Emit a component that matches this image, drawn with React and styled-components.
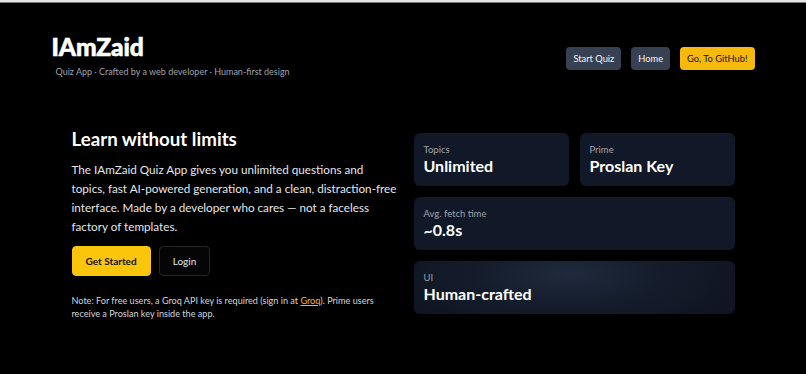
import React from 'react';
import styled, { createGlobalStyle } from 'styled-components';

const GlobalStyle = createGlobalStyle`
  html, body {
    margin: 0;
    padding: 0;
    background: #000;
  }
  body {
    font-family: Lato, "Noto Sans", Arial, sans-serif;
    color: #f3f4f6;
  }
  * { box-sizing: border-box; }
`;

const S = {
  Page: styled.div`
    width: 806px;
    height: 374px;
    background: #000;
    border-top: 2px solid #e6e6e6;
    box-shadow: inset 0 1px 0 #7a7a7a;
    overflow: hidden;
  `,

  Header: styled.header`
    width: 703px;
    margin: 0 auto;
    padding-top: 31px;
    display: flex;
    justify-content: space-between;
    align-items: flex-start;
  `,

  Brand: styled.div`
    display: flex;
    flex-direction: column;
  `,

  Logo: styled.h1`
    margin: 0;
    font-size: 24.5px;
    line-height: 28px;
    font-weight: 900;
    letter-spacing: -0.1px;
    color: #fff;
    -webkit-text-stroke: 0.6px #fff;
  `,

  Tagline: styled.p`
    margin: 5px 0 0 4px;
    font-size: 9px;
    color: #9ca3af;
  `,

  Nav: styled.nav`
    display: flex;
    gap: 10px;
    margin-top: 14px;
  `,

  NavButton: styled.button`
    font-family: inherit;
    font-size: 9.3px;
    height: 23px;
    padding: 0 7px;
    border: none;
    border-radius: 4px;
    background: ${(p) => (p.$accent ? '#f6b90c' : '#384152')};
    color: ${(p) => (p.$accent ? '#111' : '#f3f4f6')};
  `,

  Hero: styled.section`
    width: 663px;
    margin: 50px auto 0;
    display: grid;
    grid-template-columns: 330px 321px;
    align-items: start;
    gap: 12px;
  `,

  Intro: styled.div`
    display: flex;
    flex-direction: column;
  `,

  Title: styled.h2`
    margin: 0;
    font-size: 18.7px;
    line-height: 24px;
    font-weight: 700;
    color: #fff;
  `,

  Lead: styled.p`
    max-width: 327px;
    margin: 9px 0 0;
    font-size: 11.7px;
    line-height: 19px;
    color: #e5e7eb;
  `,

  Actions: styled.div`
    display: flex;
    gap: 8px;
    margin-top: 10px;
  `,

  CtaButton: styled.button`
    font-family: inherit;
    font-size: 10px;
    height: 30px;
    padding: 0 13px;
    border-radius: 4px;
    font-weight: ${(p) => (p.$primary ? 700 : 400)};
    background: ${(p) => (p.$primary ? '#fbc50c' : '#050505')};
    color: ${(p) => (p.$primary ? '#111' : '#e5e7eb')};
    border: 1px solid ${(p) => (p.$primary ? '#fbc50c' : '#262626')};
  `,

  Note: styled.p`
    margin: 18px 0 0;
    font-size: 9.1px;
    line-height: 13px;
    color: #d1d5db;

    a {
      color: #f6b90c;
      text-decoration: underline;
    }
  `,

  Cards: styled.div`
    margin-top: 6px;
    display: grid;
    grid-template-columns: 1fr 1fr;
    align-content: start;
    gap: 11px;
  `,

  Card: styled.div`
    grid-column: ${(p) => (p.$wide ? 'span 2' : 'auto')};
    height: 53px;
    padding: 11px 10px 0;
    border-radius: 6px;
    background: ${(p) =>
      p.$glow
        ? 'radial-gradient(ellipse 55% 120% at 48% 25%, #1f2a3c 0%, #141c2b 55%, #0f1522 100%)'
        : '#111827'};
  `,

  CardLabel: styled.div`
    font-size: 9.5px;
    line-height: 12px;
    color: #9ca3af;
  `,

  CardValue: styled.div`
    font-size: 16px;
    line-height: 20px;
    font-weight: 700;
    color: #fff;
  `,
};

const stats = [
  { label: 'Topics', value: 'Unlimited' },
  { label: 'Prime', value: 'Proslan Key' },
  { label: 'Avg. fetch time', value: '~0.8s', wide: true },
  { label: 'UI', value: 'Human-crafted', wide: true, glow: true },
];

function App() {
  return (
    <S.Page>
      <GlobalStyle />
      <S.Header>
        <S.Brand>
          <S.Logo>IAmZaid</S.Logo>
          <S.Tagline>
            Quiz App · Crafted by a web developer · Human-first design
          </S.Tagline>
        </S.Brand>
        <S.Nav>
          <S.NavButton>Start Quiz</S.NavButton>
          <S.NavButton>Home</S.NavButton>
          <S.NavButton $accent>Go, To GitHub!</S.NavButton>
        </S.Nav>
      </S.Header>

      <S.Hero>
        <S.Intro>
          <S.Title>Learn without limits</S.Title>
          <S.Lead>
            The IAmZaid Quiz App gives you unlimited questions and topics, fast
            AI-powered generation, and a clean, distraction-free interface.
            Made by a developer who cares — not a faceless factory of
            templates.
          </S.Lead>
          <S.Actions>
            <S.CtaButton $primary>Get Started</S.CtaButton>
            <S.CtaButton>Login</S.CtaButton>
          </S.Actions>
          <S.Note>
            Note: For free users, a Groq API key is required (sign in at{' '}
            <a href="#">Groq</a>). Prime users receive a Proslan key inside
            the app.
          </S.Note>
        </S.Intro>

        <S.Cards>
          {stats.map((s) => (
            <S.Card key={s.label} $wide={s.wide} $glow={s.glow}>
              <S.CardLabel>{s.label}</S.CardLabel>
              <S.CardValue>{s.value}</S.CardValue>
            </S.Card>
          ))}
        </S.Cards>
      </S.Hero>
    </S.Page>
  );
}

export default App;
